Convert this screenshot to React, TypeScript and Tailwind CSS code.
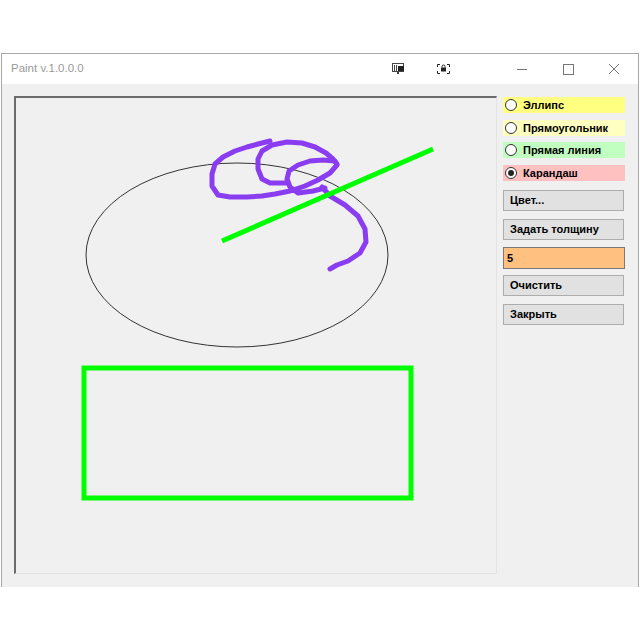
import React from "react";

const font = { fontFamily: '"Liberation Sans", Arial, sans-serif' };

const tools = [
  { label: "Эллипс", bg: "bg-[#ffff80]", mt: "mt-[1px]", checked: false },
  { label: "Прямоугольник", bg: "bg-[#ffffc0]", mt: "mt-[7px]", checked: false },
  { label: "Прямая линия", bg: "bg-[#c0ffc0]", mt: "mt-[6px]", checked: false },
  { label: "Карандаш", bg: "bg-[#ffc0c0]", mt: "mt-[7px]", checked: true },
];

function Radio({ checked }: { checked: boolean }) {
  return (
    <span className="flex h-[12px] w-[12px] items-center justify-center rounded-full border border-[#333] bg-white">
      {checked && <span className="h-[6px] w-[6px] rounded-full bg-[#222]" />}
    </span>
  );
}

function WinButton({ label, mt }: { label: string; mt: string }) {
  return (
    <button
      type="button"
      className={`${mt} flex h-[21px] w-[121px] items-center border border-[#adadad] bg-[#e1e1e1] pl-[6px] text-[11px] font-bold text-black`}
    >
      {label}
    </button>
  );
}

function TitleBar() {
  return (
    <div className="flex h-[30px] items-center bg-white">
      <span className="ml-[9px] text-[11.5px] text-[#9a9a9a]">Paint v.1.0.0.0</span>
      <div className="ml-auto flex items-center">
        <svg width="14" height="12" viewBox="0 0 14 12" className="mr-[31px]">
          <rect x="0.5" y="0.5" width="11" height="8" fill="none" stroke="#444" />
          <line x1="2.5" y1="2" x2="2.5" y2="8" stroke="#444" />
          <line x1="4.5" y1="2" x2="4.5" y2="8" stroke="#444" />
          <rect x="6" y="3" width="6" height="5" fill="#222" />
          <rect x="5" y="9" width="2" height="2" fill="#444" />
        </svg>
        <svg width="13" height="10" viewBox="0 0 13 10" className="mr-[66px]">
          <path d="M0.5 3V0.5H3M10 0.5H12.5V3M12.5 7V9.5H10M3 9.5H0.5V7" fill="none" stroke="#222" />
          <rect x="4" y="3.5" width="5" height="4" fill="#222" />
          <path d="M5 3.5V2.5a1.5 1.5 0 0 1 3 0v1" fill="none" stroke="#222" />
        </svg>
        <svg width="12" height="12" viewBox="0 0 12 12" className="mr-[34px]">
          <line x1="1" y1="6.5" x2="11" y2="6.5" stroke="#777" />
        </svg>
        <svg width="12" height="12" viewBox="0 0 12 12" className="mr-[34px]">
          <rect x="1.5" y="1.5" width="10" height="10" fill="none" stroke="#777" />
        </svg>
        <svg width="12" height="12" viewBox="0 0 12 12" className="mr-[18px]">
          <path d="M1 1L11 11M11 1L1 11" stroke="#777" />
        </svg>
      </div>
    </div>
  );
}

function Canvas() {
  return (
    <div className="h-[478px] w-[483px] border-l-2 border-t-2 border-b border-r border-l-[#6b6b6b] border-t-[#6b6b6b] border-b-[#e3e3e3] border-r-[#e3e3e3] bg-[#f0f0f0]">
      <svg width="480" height="475" viewBox="16 99 480 475" className="block">
        <ellipse cx="237" cy="256" rx="151" ry="92" fill="none" stroke="#333" strokeWidth="1" />
        <rect x="84" y="369" width="327" height="130" fill="none" stroke="#00ff00" strokeWidth="5" />
        <polyline
          points="270,142 258,145 247,148 235,152 223,158 215,165 212,175 212,187 218,196 230,198 247,198 262,197 275,195 290,192 305,187 318,181 330,174 337,166 335,162 323,161 310,162 298,166 289,172 287,180 290,188 298,194 313,192 325,189"
          fill="none"
          stroke="#8a3cf0"
          strokeWidth="5"
          strokeLinejoin="round"
          strokeLinecap="round"
        />
        <polyline
          points="287,184 270,184 262,180 258,170 258,160 262,152 272,146 287,143 302,144 315,148 326,154 333,160 337,165"
          fill="none"
          stroke="#8a3cf0"
          strokeWidth="5"
          strokeLinejoin="round"
          strokeLinecap="round"
        />
        <polyline
          points="322,188 330,197 345,206 358,217 365,230 366,243 360,254 348,262 337,266 330,270"
          fill="none"
          stroke="#8a3cf0"
          strokeWidth="5"
          strokeLinejoin="round"
          strokeLinecap="round"
        />
        <line x1="222" y1="242" x2="433" y2="150" stroke="#00ff00" strokeWidth="5" />
      </svg>
    </div>
  );
}

export default function App() {
  return (
    <div className="h-[640px] w-[640px] bg-white pt-[53px]" style={font}>
      <div className="ml-[1px] w-[638px] border-x border-t border-[#a8a8a8]">
        <TitleBar />
        <div className="flex h-[503px] bg-[#f0f0f0] pl-[12px] pt-[12px]">
          <Canvas />
          <div className="ml-[6px] flex flex-col">
            {tools.map((t) => (
              <div key={t.label} className={`${t.mt} flex h-[16px] w-[122px] items-center gap-[6px] pl-[2px] ${t.bg}`}>
                <Radio checked={t.checked} />
                <span className="text-[11px] font-bold text-black">{t.label}</span>
              </div>
            ))}
            <WinButton label="Цвет..." mt="mt-[9px]" />
            <WinButton label="Задать толщину" mt="mt-[8px]" />
            <div className="mt-[7px] flex h-[22px] w-[122px] items-center border border-[#7a7a7a] bg-[#ffc080] pl-[3px] text-[11px] font-bold text-black">
              5
            </div>
            <WinButton label="Очистить" mt="mt-[6px]" />
            <WinButton label="Закрыть" mt="mt-[8px]" />
          </div>
        </div>
      </div>
    </div>
  );
}
